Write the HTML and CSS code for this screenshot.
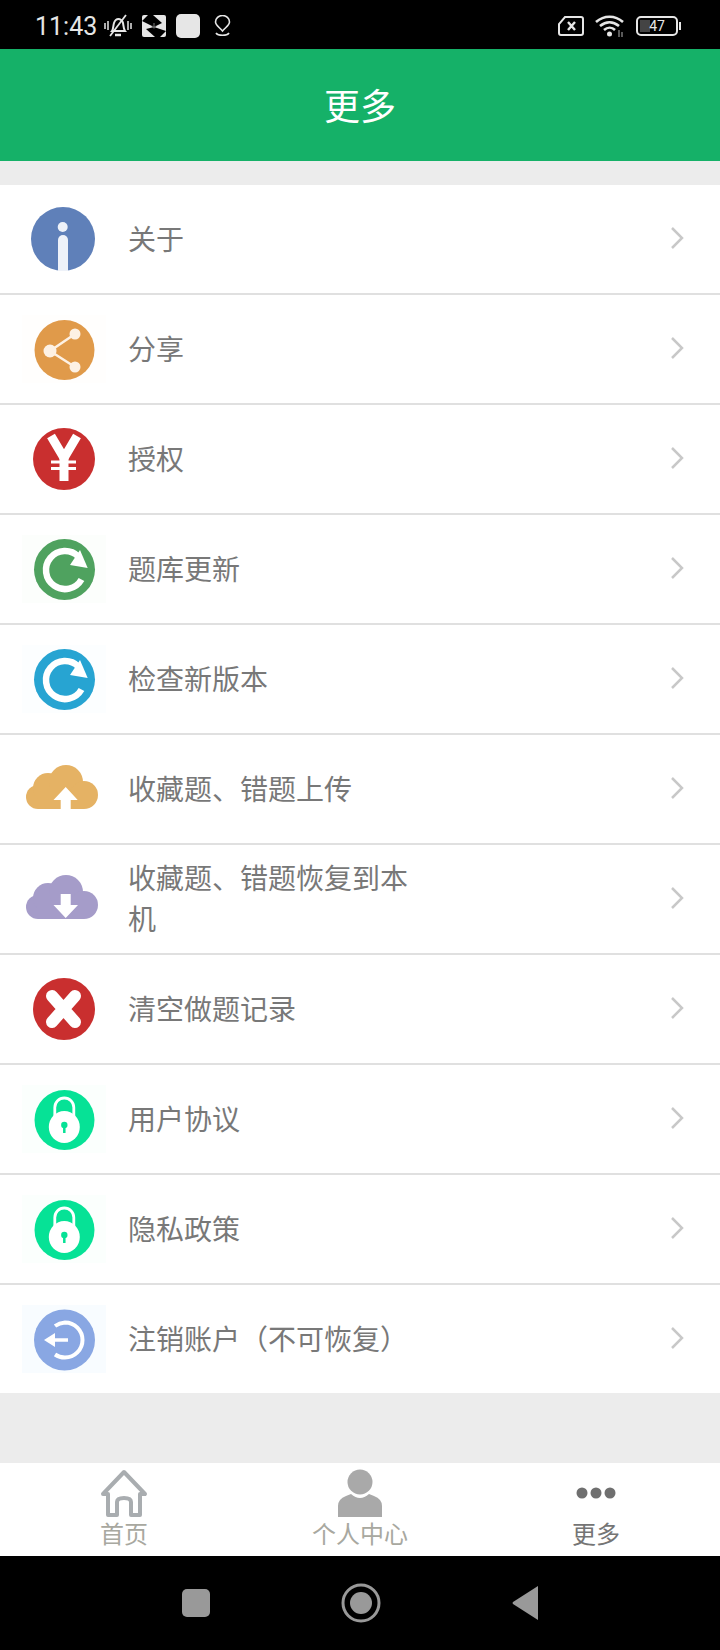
FILE: index.html
```html
<!DOCTYPE html>
<html lang="zh-CN">
<head>
    <meta charset="UTF-8">
    <meta name="viewport" content="width=device-width, initial-scale=1.0">
    <title>更多</title>
    <link rel="stylesheet" href="styles.css">
</head>
<body>
    <div class="phone">
        <div class="status-bar">
            <div class="status-left">
                <span class="time">11:43</span>
                <svg class="st-bell" viewBox="0 0 28 24" fill="none" stroke="#e6e6e6" stroke-width="2">
                    <path d="M8 17c1.500-2 1-5 2-8s3-4 4.500-4 4 1.500 4.500 4 .5 6 2 8z"/>
                    <path d="M11 21h6" stroke-width="2.500"/>
                    <path d="M6 22L22 1" stroke-width="1.800"/>
                    <path d="M1 9v6M4 7v9M24 7v9M27 9v6" stroke-width="1.500"/>
                </svg>
                <svg class="st-box" viewBox="0 0 24 22">
                    <rect width="24" height="22" rx="2" fill="#e6e6e6"/>
                    <path d="M0 6L6 0h5l9 8-8 4zM24 16l-6 6h-5L4 14l8-2z" fill="#000"/>
                    <path d="M12 8v5M10 11l2 2 2-2" stroke="#666" stroke-width="1.200" fill="none"/>
                </svg>
                <div class="st-square"></div>
                <svg class="st-pin" viewBox="0 0 17 22" fill="none" stroke="#e6e6e6" stroke-width="1.600">
                    <path d="M8.500 16C5 12 1.500 10 1.500 7a7 6.500 0 0 1 14 0c0 3-3.500 5-7 9z"/>
                    <path d="M2 18c2 3 11 3 13 0"/>
                </svg>
            </div>
            <div class="status-right">
                <svg class="st-sim" viewBox="0 0 26 20" fill="none" stroke="#e6e6e6" stroke-width="2">
                    <path d="M7 1h16a2 2 0 0 1 2 2v14a2 2 0 0 1-2 2H3a2 2 0 0 1-2-2V8z"/>
                    <path d="M10 6l7 8M17 6l-7 8" stroke-width="2.400"/>
                </svg>
                <svg class="st-wifi" viewBox="0 0 30 22" fill="none" stroke="#e6e6e6" stroke-width="2.600">
                    <path d="M1 7c8-7 19-7 27 0M5 11c6-5 13-5 19 0M9 15c3.500-3 8-3 11 0"/>
                    <circle cx="14.500" cy="19" r="2.500" fill="#e6e6e6" stroke="none"/>
                    <path d="M24 15v7M27 17v5" stroke="#777" stroke-width="1.500"/>
                </svg>
                <div class="st-battery">
                    <div class="st-cell"><span class="st-level"></span><span class="st-num">47</span></div>
                    <span class="st-tip"></span>
                </div>
            </div>
        </div>

        <header class="title-bar">更多</header>

        <main class="content">
            <ul class="menu">
                <li class="menu-row">
                    <svg class="menu-icon" viewBox="0 0 84 68">
                        <circle cx="41" cy="34" r="32" fill="#5f80b9"/>
                        <circle cx="40.700" cy="22" r="5" fill="#eef2f9"/>
                        <path d="M36 66V35a5 5 0 0 1 10 0v31z" fill="#eef2f9"/>
                    </svg>
                    <span class="menu-label">关于</span>
                    <svg class="chevron" viewBox="0 0 14 24"><path d="M2 2l10 10L2 22"/></svg>
                </li>
                <li class="menu-row">
                    <svg class="menu-icon icon-bg-warm" viewBox="0 0 84 68">
                        <circle cx="42.500" cy="35" r="30" fill="#e09a4a"/>
                        <path d="M53 19L28 36l25 16" fill="none" stroke="#fdf1e4" stroke-width="2.500"/>
                        <circle cx="28" cy="36" r="6.500" fill="#fdf1e4"/>
                        <circle cx="53" cy="19" r="5.500" fill="#fdf1e4"/>
                        <circle cx="53" cy="52" r="5.500" fill="#fdf1e4"/>
                    </svg>
                    <span class="menu-label">分享</span>
                    <svg class="chevron" viewBox="0 0 14 24"><path d="M2 2l10 10L2 22"/></svg>
                </li>
                <li class="menu-row">
                    <svg class="menu-icon" viewBox="0 0 84 68">
                        <circle cx="42" cy="34" r="31" fill="#c92f2f"/>
                        <path d="M29 11l13 22 13-22" fill="none" stroke="#fff" stroke-width="9"/>
                        <path d="M42 30v26" stroke="#fff" stroke-width="9"/>
                        <path d="M29 37h25M29 43.500h25" stroke="#fff" stroke-width="3"/>
                    </svg>
                    <span class="menu-label">授权</span>
                    <svg class="chevron" viewBox="0 0 14 24"><path d="M2 2l10 10L2 22"/></svg>
                </li>
                <li class="menu-row">
                    <svg class="menu-icon icon-bg-green" viewBox="0 0 84 68">
                        <circle cx="42.500" cy="34.500" r="30.500" fill="#4fa25f"/>
                        <path d="M56.400 21.600A19 19 0 1 0 59.500 44.500" fill="none" stroke="#fff" stroke-width="6.500"/>
                        <path d="M65.700 33L58 15 48 30z" fill="#fff"/>
                    </svg>
                    <span class="menu-label">题库更新</span>
                    <svg class="chevron" viewBox="0 0 14 24"><path d="M2 2l10 10L2 22"/></svg>
                </li>
                <li class="menu-row">
                    <svg class="menu-icon icon-bg-blue" viewBox="0 0 84 68">
                        <circle cx="42.500" cy="34.500" r="30.500" fill="#27a4d2"/>
                        <path d="M56.400 21.600A19 19 0 1 0 59.500 44.500" fill="none" stroke="#fff" stroke-width="6.500"/>
                        <path d="M65.700 33L58 15 48 30z" fill="#fff"/>
                    </svg>
                    <span class="menu-label">检查新版本</span>
                    <svg class="chevron" viewBox="0 0 14 24"><path d="M2 2l10 10L2 22"/></svg>
                </li>
                <li class="menu-row">
                    <svg class="menu-icon" viewBox="0 0 84 68">
                        <g fill="#e5b264">
                            <circle cx="16" cy="42" r="12"/>
                            <circle cx="26" cy="33" r="15"/>
                            <circle cx="44" cy="27" r="17"/>
                            <circle cx="62" cy="40" r="14"/>
                            <rect x="16" y="36" width="46" height="18"/>
                        </g>
                        <path d="M43.700 32L55.700 45H48.700V56H38.700V45H31.500z" fill="#fff"/>
                    </svg>
                    <span class="menu-label">收藏题、错题上传</span>
                    <svg class="chevron" viewBox="0 0 14 24"><path d="M2 2l10 10L2 22"/></svg>
                </li>
                <li class="menu-row">
                    <svg class="menu-icon" viewBox="0 0 84 68">
                        <g fill="#a59cc9">
                            <circle cx="16" cy="42" r="12"/>
                            <circle cx="26" cy="33" r="15"/>
                            <circle cx="44" cy="27" r="17"/>
                            <circle cx="62" cy="40" r="14"/>
                            <rect x="16" y="36" width="46" height="18"/>
                        </g>
                        <path d="M38.700 29H48.700V40H56L43.700 53 31.500 40H38.700z" fill="#fff"/>
                    </svg>
                    <span class="menu-label">收藏题、错题恢复到本机</span>
                    <svg class="chevron" viewBox="0 0 14 24"><path d="M2 2l10 10L2 22"/></svg>
                </li>
                <li class="menu-row">
                    <svg class="menu-icon" viewBox="0 0 84 68">
                        <circle cx="42" cy="34" r="31" fill="#c92f2f"/>
                        <path d="M30 21l23 26M53 21L30 47" stroke="#fff" stroke-width="12" stroke-linecap="round"/>
                    </svg>
                    <span class="menu-label">清空做题记录</span>
                    <svg class="chevron" viewBox="0 0 14 24"><path d="M2 2l10 10L2 22"/></svg>
                </li>
                <li class="menu-row">
                    <svg class="menu-icon icon-bg-mint" viewBox="0 0 84 68">
                        <circle cx="42.500" cy="35" r="30" fill="#06e296"/>
                        <path d="M32.800 32V22.500a9.500 9.500 0 0 1 19 0V32" fill="none" stroke="#fff" stroke-width="2.800"/>
                        <ellipse cx="42.300" cy="42" rx="15.500" ry="16" fill="#fff"/>
                        <circle cx="42.300" cy="40" r="3.200" fill="#06e296"/>
                        <path d="M42.300 40v8" stroke="#06e296" stroke-width="2.500"/>
                    </svg>
                    <span class="menu-label">用户协议</span>
                    <svg class="chevron" viewBox="0 0 14 24"><path d="M2 2l10 10L2 22"/></svg>
                </li>
                <li class="menu-row">
                    <svg class="menu-icon icon-bg-mint" viewBox="0 0 84 68">
                        <circle cx="42.500" cy="35" r="30" fill="#06e296"/>
                        <path d="M32.800 32V22.500a9.500 9.500 0 0 1 19 0V32" fill="none" stroke="#fff" stroke-width="2.800"/>
                        <ellipse cx="42.300" cy="42" rx="15.500" ry="16" fill="#fff"/>
                        <circle cx="42.300" cy="40" r="3.200" fill="#06e296"/>
                        <path d="M42.300 40v8" stroke="#06e296" stroke-width="2.500"/>
                    </svg>
                    <span class="menu-label">隐私政策</span>
                    <svg class="chevron" viewBox="0 0 14 24"><path d="M2 2l10 10L2 22"/></svg>
                </li>
                <li class="menu-row">
                    <svg class="menu-icon icon-bg-sky" viewBox="0 0 84 68">
                        <circle cx="42.500" cy="35" r="30.500" fill="#89a7e3"/>
                        <path d="M33 21a17.500 14.500 0 0 1 10-3.500 17.500 17.500 0 0 1 0 35 17.500 17.500 0 0 1-10-3" fill="none" stroke="#fff" stroke-width="4"/>
                        <path d="M46 35H30" stroke="#fff" stroke-width="3.500"/>
                        <path d="M22 35l11-7v14z" fill="#fff"/>
                    </svg>
                    <span class="menu-label">注销账户（不可恢复）</span>
                    <svg class="chevron" viewBox="0 0 14 24"><path d="M2 2l10 10L2 22"/></svg>
                </li>
            </ul>
        </main>

        <nav class="tab-bar">
            <div class="tab">
                <svg class="tab-icon" viewBox="0 0 48 48">
                    <path d="M8 46V25H3L24 3l21 22h-5v21h-9V33q0-4-7-4t-7 4v13z" fill="none" stroke="#a9adb0" stroke-width="4" stroke-linejoin="round"/>
                </svg>
                <span class="tab-text">首页</span>
            </div>
            <div class="tab">
                <svg class="tab-icon" viewBox="0 0 48 48">
                    <ellipse cx="24" cy="13" rx="12.500" ry="12.500" fill="#a9a9a9"/>
                    <path d="M2 48V37q0-7 8-10l5-2q9 8 18 0l5 2q8 3 8 10v11z" fill="#a9a9a9"/>
                </svg>
                <span class="tab-text">个人中心</span>
            </div>
            <div class="tab tab-active">
                <svg class="tab-icon" viewBox="0 0 48 48" fill="#6f6f6f">
                    <circle cx="10" cy="24" r="5.500"/>
                    <circle cx="24" cy="24" r="5.500"/>
                    <circle cx="38" cy="24" r="5.500"/>
                </svg>
                <span class="tab-text">更多</span>
            </div>
        </nav>

        <div class="system-nav">
            <div class="sys-square"></div>
            <svg class="sys-home" viewBox="0 0 40 40">
                <circle cx="20" cy="20" r="18" fill="none" stroke="#999" stroke-width="3"/>
                <circle cx="20" cy="20" r="11" fill="#999"/>
            </svg>
            <svg class="sys-back" viewBox="0 0 26 34">
                <path d="M26 0v34L1 18q-1-1 0-2z" fill="#999"/>
            </svg>
        </div>
    </div>
</body>
</html>
```

FILE: styles.css
```css
* {
    margin: 0;
    padding: 0;
    box-sizing: border-box;
}

body {
    font-family: "Noto Sans CJK SC", "Noto Sans", sans-serif;
    background: #000;
}

.phone {
    width: 720px;
    height: 1650px;
    display: flex;
    flex-direction: column;
    overflow: hidden;
}

/* status bar */
.status-bar {
    height: 49px;
    background: #000;
    display: flex;
    justify-content: space-between;
    align-items: center;
    padding: 3px 39px 0 35px;
    flex-shrink: 0;
}

.status-left,
.status-right {
    display: flex;
    align-items: center;
}

.status-left {
    gap: 10px;
}

.status-right {
    gap: 11px;
}

.time {
    font-family: Roboto, sans-serif;
    font-size: 25px;
    color: #e6e6e6;
    margin-right: -3px;
}

.st-bell {
    width: 28px;
    height: 24px;
}

.st-box {
    width: 24px;
    height: 22px;
}

.st-square {
    width: 24px;
    height: 24px;
    border-radius: 5px;
    background: #e6e6e6;
}

.st-pin {
    width: 17px;
    height: 22px;
    margin-left: 4px;
}

.st-sim {
    width: 26px;
    height: 20px;
}

.st-wifi {
    width: 30px;
    height: 22px;
}

.st-battery {
    display: flex;
    align-items: center;
    gap: 1px;
}

.st-cell {
    position: relative;
    width: 42px;
    height: 20px;
    border: 2px solid #e6e6e6;
    border-radius: 5px;
    display: flex;
    align-items: center;
    justify-content: center;
}

.st-level {
    position: absolute;
    left: 2px;
    top: 2px;
    bottom: 2px;
    width: 10px;
    background: #444;
}

.st-num {
    position: relative;
    font-family: Roboto, sans-serif;
    font-size: 14px;
    color: #e6e6e6;
}

.st-tip {
    width: 2px;
    height: 8px;
    background: #e6e6e6;
}

/* title */
.title-bar {
    height: 112px;
    background: #15b168;
    color: #fff;
    font-size: 36px;
    font-weight: 400;
    padding-bottom: 2px;
    display: flex;
    align-items: center;
    justify-content: center;
    flex-shrink: 0;
}

/* menu list */
.content {
    flex: 1;
    background: #ececec;
    padding-top: 24px;
}

.menu {
    list-style: none;
    background: #fff;
}

.menu-row {
    height: 110px;
    display: flex;
    align-items: center;
    padding: 0 36px 0 22px;
    border-bottom: 2px solid #e0e0e0;
}

.menu-row:last-child {
    height: 108px;
    border-bottom: none;
}

.menu-icon {
    width: 84px;
    height: 68px;
    flex-shrink: 0;
}

.icon-bg-warm {
    background: #fffefd;
}

.icon-bg-green {
    background: #fcfefc;
}

.icon-bg-blue {
    background: #fcfeff;
}

.icon-bg-mint {
    background: #fbfffd;
}

.icon-bg-sky {
    background: #f8fcff;
}

.menu-label {
    width: 290px;
    margin-left: 22px;
    padding-bottom: 2px;
    font-size: 28px;
    line-height: 41px;
    color: #787878;
}

.chevron {
    width: 14px;
    height: 24px;
    margin-left: auto;
    margin-bottom: 3px;
    fill: none;
    stroke: #c8c8c8;
    stroke-width: 2.500;
}

/* bottom tabs */
.tab-bar {
    height: 93px;
    background: #fff;
    display: grid;
    grid-template-columns: repeat(3, 1fr);
    padding: 6px 6px 0;
    flex-shrink: 0;
}

.tab {
    display: flex;
    flex-direction: column;
    align-items: center;
    color: #a8a8a0;
}

.tab-active {
    color: #757575;
}

.tab-icon {
    width: 48px;
    height: 48px;
}

.tab-text {
    font-size: 24px;
    line-height: 30px;
    margin-top: 1px;
}

/* android nav */
.system-nav {
    height: 94px;
    background: #000;
    display: flex;
    align-items: center;
    justify-content: center;
    flex-shrink: 0;
}

.sys-square {
    width: 28px;
    height: 28px;
    border-radius: 5px;
    background: #999;
}

.sys-home {
    width: 40px;
    height: 40px;
    margin: 0 131px;
}

.sys-back {
    width: 26px;
    height: 34px;
}
```
